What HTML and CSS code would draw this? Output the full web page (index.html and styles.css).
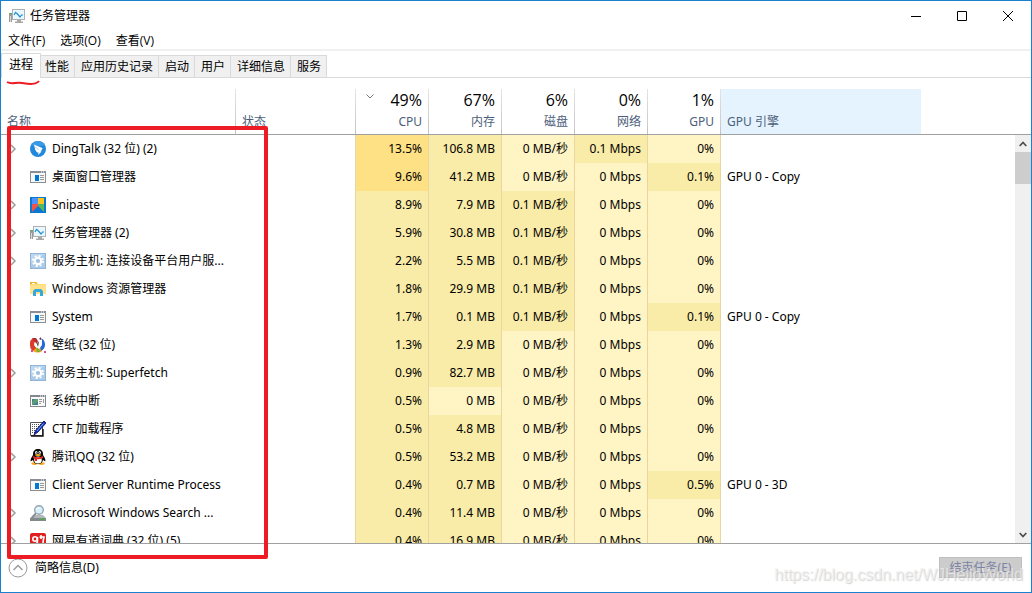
FILE: index.html
```html
<!DOCTYPE html>
<html lang="zh-CN">
<head>
<meta charset="utf-8">
<title>任务管理器</title>
<link rel="stylesheet" href="styles.css">
</head>
<body>
<svg class="sprites" aria-hidden="true">
  <symbol id="i-monitor" viewBox="0 0 16 16">
    <path d="M0 5h3v9H0z" fill="#9a9a9a"/><path d="M1 8h1v6H1z" fill="#d8d8d8"/><path d="M0 5h3v1H0z" fill="#5fae5f"/>
    <rect x="3.500" y="1.500" width="12" height="10" fill="#e9f7ff" stroke="#b0b0b0"/>
    <path d="M5 7l1.500-2.500L8.500 6l2.500 3 1.500-2H14" fill="none" stroke="#1f8fd0" stroke-width="1.200"/>
    <path d="M8 12h4v1.500H8zM6 13.500h8V15H6z" fill="#a8a8a8"/>
  </symbol>
  <symbol id="i-ding" viewBox="0 0 16 16">
    <circle cx="8" cy="8" r="8" fill="#2188dc"/><path d="M1 4.200A8 8 0 0 1 15 4.200L10 5z" fill="#3a9ae4"/>
    <path d="M4 3.500c3 1.500 5.500 2.300 8.500 3.500-.2 1.600-1.200 2.700-2 3.500h1.200L8 14l.6-2.500H7.300C5.800 10.200 5 8.600 4.800 7z" fill="#fff"/>
    <path d="M5 6l4 2.500" stroke="#9fd0f3" stroke-width=".8"/>
  </symbol>
  <symbol id="i-app" viewBox="0 0 16 16">
    <rect x=".5" y="2.500" width="15" height="11" fill="#f7f7f7" stroke="#8b8e94"/>
    <path d="M0 2h16v2H0z" fill="#8b8e94"/><path d="M11 2.500h1v1h-1zM13 2.500h1v1h-1z" fill="#fff"/>
    <path d="M5 6h4v6H5z" fill="#0078d7"/><path d="M10 6h4v1h-4zM10 8h4v1h-4zM10 10h4v1h-4z" fill="#999"/>
  </symbol>
  <symbol id="i-interrupt" viewBox="0 0 16 16">
    <rect x=".5" y="2.500" width="15" height="11" fill="#f9f9f9" stroke="#83888e"/>
    <path d="M0 2h16v2H0z" fill="#83888e"/><path d="M10 2.500h1v1h-1zM12 2.500h1v1h-1zM14 2.500h1v1h-1z" fill="#fff"/>
    <path d="M2 6h6v6H2z" fill="#3f7e91"/><path d="M2 9l3-3h3v3l-6 3z" fill="#5c9d76"/><path d="M9 6h3v1H9zM9 8h3v1H9zM9 10h2v1H9zM13 6h1v4h-1z" fill="#999"/>
  </symbol>
  <symbol id="i-snip" viewBox="0 0 16 16">
    <path d="M0 0h16v16H0z" fill="#0878d0"/><path d="M2 1h6v6H2z" fill="#4c91ff"/><path d="M8 1h6v6H8z" fill="#fbc31b"/>
    <path d="M2 7h6v2l-6 6z" fill="#f25348"/><path d="M8 7h6v8L8 9z" fill="#58b65b"/>
  </symbol>
  <symbol id="i-gear" viewBox="0 0 16 16">
    <rect x=".5" y=".5" width="15" height="15" fill="#a9cbe8" stroke="#8fb4d8"/><path d="M1 1h14L1 10z" fill="#bdd8ee"/>
    <circle cx="8" cy="8" r="5" fill="none" stroke="#fff" stroke-width="2" stroke-dasharray="2 1.930"/>
    <circle cx="8" cy="8" r="3.200" fill="#9bbfe2" stroke="#fff" stroke-width="2.200"/>
  </symbol>
  <symbol id="i-folder" viewBox="0 0 16 16">
    <path d="M0 1h7l1 2h8v10H0z" fill="#ffdc72"/><path d="M0 1h6l1 2H0z" fill="#e8b52d"/><path d="M0 4h16v9H0z" fill="#ffe28a"/><path d="M2 2h3v1H2z" fill="#fff"/>
    <path d="M3 15V10l2-2h6l2 2v5h-3v-4H6v4z" fill="#35a9df"/>
  </symbol>
  <symbol id="i-paper" viewBox="0 0 16 16">
    <path d="M6 1C2 1 0 3 0 6s0 6 3 8l4-2-3-4z" fill="#dc3b28"/><path d="M3 14c3 2 7 2 9 0l-1-4-5 1z" fill="#f5a11b"/>
    <path d="M10 1c4 1 5 4 5 7s-2 5-4 6l-1-5z" fill="#2368d8"/><path d="M6 11l2-1 2 5H7z" fill="#69b634"/>
    <path d="M6 3l2 1 2-3 2 2v5l-3 4-4-3 1-1-2-2 2-1z" fill="#fff"/><path d="M2 1h4l2 3-1 3-3-3z" fill="#b52b32"/><path d="M9 2l2-2v3z" fill="#7c2639"/><path d="M7 7l2-3-1 6z" fill="#333"/>
    <path d="M1 13h2v2H1zM14 14h2v2h-2z" fill="#e5489a"/>
  </symbol>
  <symbol id="i-ctf" viewBox="0 0 16 16">
    <path d="M.5 1.500h12v13H.5z" fill="#fff" stroke="#555"/><path d="M2 3.500h9M2 5.500h8M2 7.500h6M2 9.500h5M2 11.500h3" stroke="#555" stroke-dasharray="1 1"/>
    <path d="M14 0l2 2-8 9-4 3 1.500-4.500z" fill="#1634b8" stroke="#080c50" stroke-width=".8"/><path d="M13.500 2.500L7 10" stroke="#74b0ff"/><path d="M1 15h12V8" fill="none" stroke="#111" stroke-width="1.400"/>
  </symbol>
  <symbol id="i-qq" viewBox="0 0 16 16">
    <ellipse cx="4.500" cy="14.600" rx="3.200" ry="1.400" fill="#f7a51a"/><ellipse cx="11.500" cy="14.600" rx="3.200" ry="1.400" fill="#f7a51a"/>
    <path d="M8 0c3 0 5 2 5 5v1c1 2 3 4 2.300 6.500L13 11c-.6 2.500-2 4-5 4s-4.400-1.500-5-4L.7 12.500C0 10 2 8 3 6V5c0-3 2-5 5-5z" fill="#080808"/>
    <ellipse cx="8" cy="11" rx="3.800" ry="3.500" fill="#fff"/><ellipse cx="6.300" cy="3.600" rx="1.200" ry="1.500" fill="#fff"/><ellipse cx="9.700" cy="3.600" rx="1.200" ry="1.500" fill="#fff"/>
    <circle cx="6.600" cy="3.800" r=".6"/><circle cx="9.400" cy="3.800" r=".6"/><ellipse cx="8" cy="5.900" rx="3" ry="1" fill="#f9b115"/>
    <path d="M3 7q5 2.500 10 0v2q-3 1.500-6 1.200V12H5V9.800L3 9z" fill="#e52822"/>
  </symbol>
  <symbol id="i-search" viewBox="0 0 16 16">
    <path d="M3 10h10l3 3v3H0v-3z" fill="#b4b8ba"/><path d="M0 13h16v3H0z" fill="#84898c"/><path d="M11 13.500h3V15h-3z" fill="#35b839"/>
    <path d="M6 8l-4 5" stroke="#7d8b94" stroke-width="2"/><circle cx="9" cy="5" r="4.300" fill="#d7eefb" stroke="#94a6b1" stroke-width="1.400"/><path d="M6 5q1-3 4-2" stroke="#fff" fill="none"/>
  </symbol>
  <symbol id="i-youdao" viewBox="0 0 16 16">
    <rect width="16" height="16" rx="2" fill="#e02020"/><circle cx="5" cy="6" r="2.200" fill="none" stroke="#fff" stroke-width="1.600"/>
    <path d="M7.500 4v4q0 3-4 4M9.500 4H14q-1 3-1 8M11 2v4" stroke="#fff" stroke-width="1.600" fill="none"/>
  </symbol>
  <symbol id="i-expand" viewBox="0 0 8 10"><path d="M2 1l4 4-4 4" fill="none" stroke="#a0a0a0" stroke-width="1.600"/></symbol>
</svg>

<main class="window">
  <header class="titlebar">
    <svg class="icon"><use href="#i-monitor"/></svg>
    <h1 class="title">任务管理器</h1>
    <div class="controls">
      <button class="control" aria-label="最小化"><svg viewBox="0 0 12 12"><path d="M1 6.500h10" stroke="#000"/></svg></button>
      <button class="control" aria-label="最大化"><svg viewBox="0 0 12 12"><path d="M1.500 1.500h9v9h-9z" fill="none" stroke="#000"/></svg></button>
      <button class="control" aria-label="关闭"><svg viewBox="0 0 12 12"><path d="M1 1l10 10M11 1L1 11" stroke="#000"/></svg></button>
    </div>
  </header>
  <nav class="menu"><button>文件(F)</button><button>选项(O)</button><button>查看(V)</button></nav>
  <div class="tabs" role="tablist">
    <button class="tab tab-active" role="tab" aria-selected="true">进程<svg class="underline" viewBox="0 0 34 6"><path d="M1 2C6 5 9 2 16 3s14 2 17-2" fill="none" stroke="#ed1c24" stroke-width="2"/></svg></button>
    <button class="tab" role="tab">性能</button><button class="tab" role="tab">应用历史记录</button><button class="tab" role="tab">启动</button><button class="tab" role="tab">用户</button><button class="tab" role="tab">详细信息</button><button class="tab" role="tab">服务</button>
  </div>
  <section class="panel">
    <div class="list">
      <table class="processes">
        <colgroup><col class="c-name"><col class="c-status"><col class="c-num"><col class="c-num"><col class="c-num"><col class="c-num"><col class="c-num"><col class="c-engine"><col></colgroup>
        <thead><tr>
          <th class="left">名称</th><th class="left">状态</th>
          <th><svg class="sort" viewBox="0 0 8 5"><path d="M.5.5L4 4 7.500.5" fill="none" stroke="#777"/></svg><span class="total">49%</span>CPU</th>
          <th><span class="total">67%</span>内存</th><th><span class="total">6%</span>磁盘</th><th><span class="total">0%</span>网络</th><th><span class="total">1%</span>GPU</th>
          <th class="left engine">GPU 引擎</th><th class="rest"></th>
        </tr></thead>
        <tbody>
          <tr><td><div class="name"><button class="expand" aria-label="展开"><svg><use href="#i-expand"/></svg></button><svg class="icon"><use href="#i-ding"/></svg><span>DingTalk (32 位) (2)</span></div></td><td></td><td class="high">13.5%</td><td class="mid">106.8 MB</td><td class="low">0 MB/秒</td><td class="mid">0.1 Mbps</td><td class="low">0%</td><td></td><td></td></tr>
          <tr><td><div class="name"><i class="expand"></i><svg class="icon"><use href="#i-app"/></svg><span>桌面窗口管理器</span></div></td><td></td><td class="high">9.6%</td><td class="mid">41.2 MB</td><td class="low">0 MB/秒</td><td class="low">0 Mbps</td><td class="mid">0.1%</td><td>GPU 0 - Copy</td><td></td></tr>
          <tr><td><div class="name"><button class="expand" aria-label="展开"><svg><use href="#i-expand"/></svg></button><svg class="icon"><use href="#i-snip"/></svg><span>Snipaste</span></div></td><td></td><td class="mid">8.9%</td><td class="mid">7.9 MB</td><td class="mid">0.1 MB/秒</td><td class="low">0 Mbps</td><td class="low">0%</td><td></td><td></td></tr>
          <tr><td><div class="name"><button class="expand" aria-label="展开"><svg><use href="#i-expand"/></svg></button><svg class="icon"><use href="#i-monitor"/></svg><span>任务管理器 (2)</span></div></td><td></td><td class="mid">5.9%</td><td class="mid">30.8 MB</td><td class="mid">0.1 MB/秒</td><td class="low">0 Mbps</td><td class="low">0%</td><td></td><td></td></tr>
          <tr><td><div class="name"><button class="expand" aria-label="展开"><svg><use href="#i-expand"/></svg></button><svg class="icon"><use href="#i-gear"/></svg><span>服务主机: 连接设备平台用户服...</span></div></td><td></td><td class="mid">2.2%</td><td class="mid">5.5 MB</td><td class="mid">0.1 MB/秒</td><td class="low">0 Mbps</td><td class="low">0%</td><td></td><td></td></tr>
          <tr><td><div class="name"><i class="expand"></i><svg class="icon"><use href="#i-folder"/></svg><span>Windows 资源管理器</span></div></td><td></td><td class="mid">1.8%</td><td class="mid">29.9 MB</td><td class="mid">0.1 MB/秒</td><td class="low">0 Mbps</td><td class="low">0%</td><td></td><td></td></tr>
          <tr><td><div class="name"><i class="expand"></i><svg class="icon"><use href="#i-app"/></svg><span>System</span></div></td><td></td><td class="mid">1.7%</td><td class="mid">0.1 MB</td><td class="mid">0.1 MB/秒</td><td class="low">0 Mbps</td><td class="mid">0.1%</td><td>GPU 0 - Copy</td><td></td></tr>
          <tr><td><div class="name"><i class="expand"></i><svg class="icon"><use href="#i-paper"/></svg><span>壁纸 (32 位)</span></div></td><td></td><td class="mid">1.3%</td><td class="mid">2.9 MB</td><td class="low">0 MB/秒</td><td class="low">0 Mbps</td><td class="low">0%</td><td></td><td></td></tr>
          <tr><td><div class="name"><button class="expand" aria-label="展开"><svg><use href="#i-expand"/></svg></button><svg class="icon"><use href="#i-gear"/></svg><span>服务主机: Superfetch</span></div></td><td></td><td class="mid">0.9%</td><td class="mid">82.7 MB</td><td class="low">0 MB/秒</td><td class="low">0 Mbps</td><td class="low">0%</td><td></td><td></td></tr>
          <tr><td><div class="name"><i class="expand"></i><svg class="icon"><use href="#i-interrupt"/></svg><span>系统中断</span></div></td><td></td><td class="mid">0.5%</td><td class="low">0 MB</td><td class="low">0 MB/秒</td><td class="low">0 Mbps</td><td class="low">0%</td><td></td><td></td></tr>
          <tr><td><div class="name"><i class="expand"></i><svg class="icon"><use href="#i-ctf"/></svg><span>CTF 加载程序</span></div></td><td></td><td class="mid">0.5%</td><td class="mid">4.8 MB</td><td class="low">0 MB/秒</td><td class="low">0 Mbps</td><td class="low">0%</td><td></td><td></td></tr>
          <tr><td><div class="name"><button class="expand" aria-label="展开"><svg><use href="#i-expand"/></svg></button><svg class="icon"><use href="#i-qq"/></svg><span>腾讯QQ (32 位)</span></div></td><td></td><td class="mid">0.5%</td><td class="mid">53.2 MB</td><td class="low">0 MB/秒</td><td class="low">0 Mbps</td><td class="low">0%</td><td></td><td></td></tr>
          <tr><td><div class="name"><i class="expand"></i><svg class="icon"><use href="#i-app"/></svg><span>Client Server Runtime Process</span></div></td><td></td><td class="mid">0.4%</td><td class="mid">0.7 MB</td><td class="low">0 MB/秒</td><td class="low">0 Mbps</td><td class="mid">0.5%</td><td>GPU 0 - 3D</td><td></td></tr>
          <tr><td><div class="name"><button class="expand" aria-label="展开"><svg><use href="#i-expand"/></svg></button><svg class="icon"><use href="#i-search"/></svg><span>Microsoft Windows Search ...</span></div></td><td></td><td class="mid">0.4%</td><td class="mid">11.4 MB</td><td class="low">0 MB/秒</td><td class="low">0 Mbps</td><td class="low">0%</td><td></td><td></td></tr>
          <tr><td><div class="name"><button class="expand" aria-label="展开"><svg><use href="#i-expand"/></svg></button><svg class="icon"><use href="#i-youdao"/></svg><span>网易有道词典 (32 位) (5)</span></div></td><td></td><td class="mid">0.4%</td><td class="mid">16.9 MB</td><td class="low">0 MB/秒</td><td class="low">0 Mbps</td><td class="low">0%</td><td></td><td></td></tr>
        </tbody>
      </table>
    </div>
    <div class="side">
      <div class="side-head"></div>
      <div class="scrollbar">
        <button class="arrow" aria-label="向上"><svg viewBox="0 0 8 6"><path d="M.7 5L4 1.500 7.300 5" fill="none" stroke="#505050" stroke-width="1.800"/></svg></button>
        <div class="thumb"></div>
        <button class="arrow arrow-down" aria-label="向下"><svg viewBox="0 0 8 6"><path d="M.7 1L4 4.500 7.300 1" fill="none" stroke="#505050" stroke-width="1.800"/></svg></button>
      </div>
    </div>
  </section>
  <footer class="footer">
    <button class="fewer"><svg viewBox="0 0 20 20"><circle cx="10" cy="10" r="9" fill="#fff" stroke="#999"/><path d="M5.500 12L10 7.500l4.500 4.500" fill="none" stroke="#999" stroke-width="1.400"/></svg>简略信息(D)</button>
    <button class="end" disabled>结束任务(E)</button>
    <span class="watermark">https://blog.csdn.net/WJHelloWorld</span>
  </footer>
  <div class="highlight"></div>
</main>
</body>
</html>
```

FILE: styles.css
```css
* { box-sizing: border-box; }
body {
  margin: 0;
  font: 12px/16px "Open Sans", "Noto Sans CJK SC", sans-serif;
  color: #000;
}
button {
  padding: 0;
  border: 0;
  background: none;
  font: inherit;
  color: inherit;
}
.sprites { position: absolute; width: 0; height: 0; }
.icon { flex: none; width: 16px; height: 16px; }

.window {
  position: relative;
  display: flex;
  flex-direction: column;
  height: 100vh;
  border: 1px solid #1a80d0;
  background: #fff;
}
.titlebar { display: flex; align-items: center; height: 30px; padding-left: 8px; }
.title { margin: 0 0 0 5px; font-size: 12px; font-weight: 400; }
.controls { display: flex; margin-left: auto; }
.control { display: grid; place-items: center; width: 46px; height: 28px; }
.control svg { width: 12px; height: 12px; }
.menu {
  display: flex;
  gap: 15px;
  height: 20px;
  padding: 2px 0 0 7px;
  border-bottom: 2px solid #f0f0f0;
}
.tabs {
  display: flex;
  align-items: flex-end;
  height: 27px;
  border-bottom: 1px solid #d9d9d9;
}
.tab {
  height: 22px;
  padding: 0 5px 0 6px;
  border: 1px solid #d9d9d9;
  border-width: 1px 1px 0 0;
  background: #f0f0f0;
}
.tab-active {
  position: relative;
  z-index: 1;
  height: 25px;
  margin: 0 -2px -1px 0;
  padding: 0 7px 3px;
  border-left-width: 1px;
  background: #fff;
}
.underline { position: absolute; left: 4px; top: 26px; width: 34px; height: 6px; }

.panel {
  display: flex;
  flex: 1;
  min-height: 0;
  padding-top: 11px;
  border-bottom: 1px solid #a0a0a0;
}
.list { flex: 1; min-width: 0; overflow: hidden; }
.processes {
  width: 100%;
  table-layout: fixed;
  border-collapse: separate;
  border-spacing: 0;
  font-family: "Noto Sans", "Noto Sans CJK SC", sans-serif;
  white-space: nowrap;
}
.c-name { width: 235px; }
.c-status { width: 120px; }
.c-num { width: 73px; }
.c-engine { width: 200px; }
.processes th {
  position: relative;
  height: 46px;
  padding: 0 7px 4px 6px;
  border-bottom: 1px solid #a0a0a0;
  background: linear-gradient(#e4e4e4, #c4c4c4) right / 1px 100% no-repeat;
  font-weight: 400;
  text-align: right;
  vertical-align: bottom;
  color: #4c607a;
}
.processes .left { text-align: left; }
.processes .engine { background: #e5f3ff; }
.processes .rest { background: none; }
.total {
  display: block;
  margin-bottom: 4px;
  font: 16px/20px "Open Sans", sans-serif;
  color: #000;
}
.sort { position: absolute; left: 10px; top: 5px; width: 8px; height: 5px; }
.processes td { height: 28px; padding: 0 6px; }
.processes td:first-child { padding-left: 8px; }
.processes td:nth-child(2) { border-right: 1px solid #e8d5a0; }
.high, .mid, .low { border-right: 1px solid #e8d5a0; text-align: right; }
.high { background: #ffe185; }
.mid { background: #f9eca8; }
.low { background: #fff4c4; }
.name { display: flex; align-items: center; }
.expand { display: flex; flex: none; width: 8px; height: 10px; margin-right: 13px; }
.expand svg { width: 8px; height: 10px; }
.name span { margin-left: 6px; }

.side { display: flex; flex-direction: column; width: 16px; }
.side-head { height: 46px; border-bottom: 1px solid #a0a0a0; }
.scrollbar { display: flex; flex: 1; flex-direction: column; background: #f0f0f0; }
.arrow { display: grid; place-items: center; height: 17px; }
.arrow svg { width: 8px; height: 6px; }
.arrow-down { margin-top: auto; }
.thumb { height: 32px; background: #cdcdcd; }

.footer {
  position: relative;
  display: flex;
  align-items: flex-start;
  justify-content: space-between;
  height: 48px;
  padding: 13px 9px 0 7px;
  font-family: "Noto Sans", "Noto Sans CJK SC", sans-serif;
}
.fewer { display: flex; align-items: center; gap: 7px; height: 22px; }
.fewer svg { width: 20px; height: 20px; }
.end {
  width: 83px;
  height: 21px;
  border: 1px solid #bfbfbf;
  background: #ccc;
  color: #7c84a4;
}
.watermark {
  position: absolute;
  right: 8px;
  bottom: 7px;
  font: 16px/20px "Liberation Sans", Arial, sans-serif;
  color: rgba(240, 240, 240, 0.7);
  text-shadow: 1px 1px 1px rgba(170, 170, 170, 0.5);
}
.highlight {
  position: absolute;
  left: 6px;
  top: 125px;
  width: 261px;
  bottom: 33px;
  border: 4px solid #ed1c24;
  border-radius: 2px;
  pointer-events: none;
}
```
